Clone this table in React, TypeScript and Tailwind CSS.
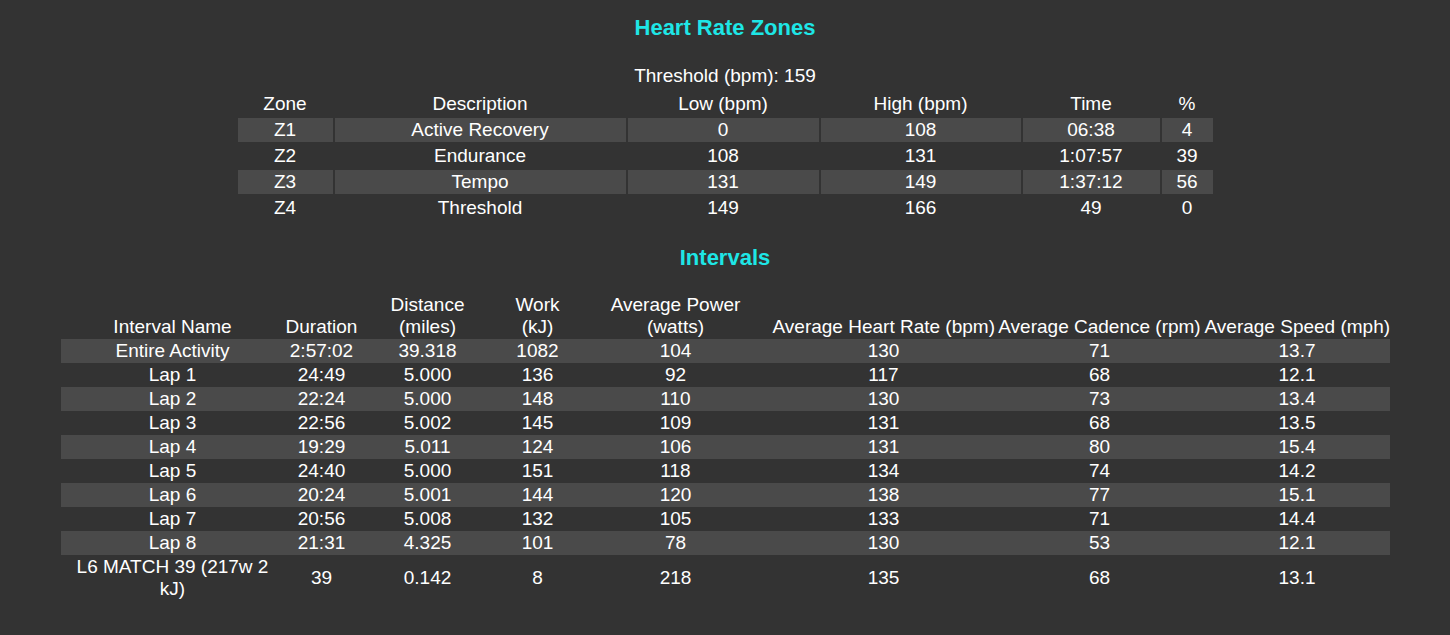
import React from 'react'

type ZoneRow = { zone: string; description: string; low: string; high: string; time: string; pct: string }

type IntervalRow = {
  name: React.ReactNode
  duration: string
  distance: string
  work: string
  power: string
  hr: string
  cadence: string
  speed: string
}

const zones: ZoneRow[] = [
  { zone: 'Z1', description: 'Active Recovery', low: '0', high: '108', time: '06:38', pct: '4' },
  { zone: 'Z2', description: 'Endurance', low: '108', high: '131', time: '1:07:57', pct: '39' },
  { zone: 'Z3', description: 'Tempo', low: '131', high: '149', time: '1:37:12', pct: '56' },
  { zone: 'Z4', description: 'Threshold', low: '149', high: '166', time: '49', pct: '0' },
]

const intervals: IntervalRow[] = [
  { name: 'Entire Activity', duration: '2:57:02', distance: '39.318', work: '1082', power: '104', hr: '130', cadence: '71', speed: '13.7' },
  { name: 'Lap 1', duration: '24:49', distance: '5.000', work: '136', power: '92', hr: '117', cadence: '68', speed: '12.1' },
  { name: 'Lap 2', duration: '22:24', distance: '5.000', work: '148', power: '110', hr: '130', cadence: '73', speed: '13.4' },
  { name: 'Lap 3', duration: '22:56', distance: '5.002', work: '145', power: '109', hr: '131', cadence: '68', speed: '13.5' },
  { name: 'Lap 4', duration: '19:29', distance: '5.011', work: '124', power: '106', hr: '131', cadence: '80', speed: '15.4' },
  { name: 'Lap 5', duration: '24:40', distance: '5.000', work: '151', power: '118', hr: '134', cadence: '74', speed: '14.2' },
  { name: 'Lap 6', duration: '20:24', distance: '5.001', work: '144', power: '120', hr: '138', cadence: '77', speed: '15.1' },
  { name: 'Lap 7', duration: '20:56', distance: '5.008', work: '132', power: '105', hr: '133', cadence: '71', speed: '14.4' },
  { name: 'Lap 8', duration: '21:31', distance: '4.325', work: '101', power: '78', hr: '130', cadence: '53', speed: '12.1' },
  {
    name: <>L6 MATCH 39 (217w 2<br />kJ)</>,
    duration: '39', distance: '0.142', work: '8', power: '218', hr: '135', cadence: '68', speed: '13.1',
  },
]

function ZonesTable() {
  return (
    <table className="mx-auto mt-[2px] w-[979px] table-fixed border-separate border-spacing-[2px]">
      <colgroup>
        <col className="w-[95px]" />
        <col className="w-[291px]" />
        <col className="w-[191px]" />
        <col className="w-[200px]" />
        <col className="w-[137px]" />
        <col className="w-[51px]" />
      </colgroup>
      <thead>
        <tr>
          {['Zone', 'Description', 'Low (bpm)', 'High (bpm)', 'Time', '%'].map((h) => (
            <th key={h} className="py-px leading-[22px] text-center font-normal whitespace-nowrap">{h}</th>
          ))}
        </tr>
      </thead>
      <tbody>
        {zones.map((z, i) => {
          const cell = i % 2 === 0 ? 'py-px leading-[22px] text-center bg-[#4a4a4a]' : 'py-px leading-[22px] text-center'
          return (
            <tr key={z.zone}>
              <td className={cell}>{z.zone}</td>
              <td className={cell}>{z.description}</td>
              <td className={cell}>{z.low}</td>
              <td className={cell}>{z.high}</td>
              <td className={cell}>{z.time}</td>
              <td className={cell}>{z.pct}</td>
            </tr>
          )
        })}
      </tbody>
    </table>
  )
}

function IntervalsTable() {
  return (
    <table className="mx-auto mt-[21px] w-[1329px] table-fixed border-collapse">
      <colgroup>
        <col className="w-[224px]" />
        <col className="w-[74px]" />
        <col className="w-[138px]" />
        <col className="w-[82px]" />
        <col className="w-[194px]" />
        <col className="w-[222px]" />
        <col className="w-[210px]" />
        <col className="w-[185px]" />
      </colgroup>
      <thead>
        <tr className="[&>th]:py-px [&>th]:leading-[22px] [&>th]:text-center [&>th]:font-normal [&>th]:align-bottom [&>th]:whitespace-nowrap">
          <th>Interval Name</th>
          <th>Duration</th>
          <th>Distance<br />(miles)</th>
          <th>Work<br />(kJ)</th>
          <th>Average Power<br />(watts)</th>
          <th>Average Heart Rate (bpm)</th>
          <th>Average Cadence (rpm)</th>
          <th>Average Speed (mph)</th>
        </tr>
      </thead>
      <tbody>
        {intervals.map((r, i) => (
          <tr
            key={i}
            className={`[&>td]:py-px [&>td]:leading-[22px] [&>td]:text-center ${i % 2 === 0 ? 'bg-[#4a4a4a]' : ''}`}
          >
            <td>{r.name}</td>
            <td>{r.duration}</td>
            <td>{r.distance}</td>
            <td>{r.work}</td>
            <td>{r.power}</td>
            <td>{r.hr}</td>
            <td>{r.cadence}</td>
            <td>{r.speed}</td>
          </tr>
        ))}
      </tbody>
    </table>
  )
}

export default function App() {
  return (
    <div className="min-h-screen bg-[#333333] pt-[14px] pb-8 text-white text-[19px] leading-[24px] font-['Liberation_Sans',Arial,sans-serif]">
      <h3 className="text-center text-[22px] leading-[28px] font-bold text-[#1ee6e6]">Heart Rate Zones</h3>
      <div className="mt-[22px] text-center">Threshold (bpm): 159</div>
      <ZonesTable />

      <h3 className="mt-[22px] text-center text-[22px] leading-[28px] font-bold text-[#1ee6e6]">Intervals</h3>
      <IntervalsTable />
    </div>
  )
}
